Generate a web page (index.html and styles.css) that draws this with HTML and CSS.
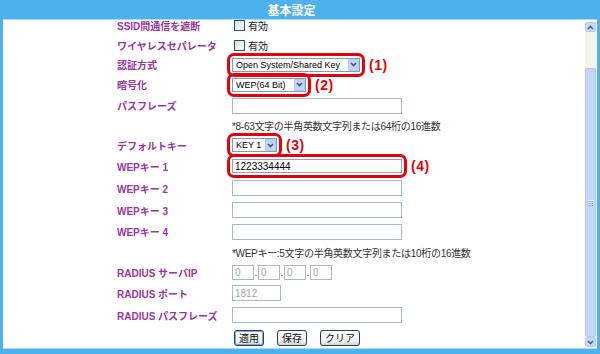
FILE: index.html
```html
<!DOCTYPE html>
<html lang="ja">
<head>
  <meta charset="UTF-8" />
  <meta name="viewport" content="width=device-width, initial-scale=1" />
  <title>基本設定</title>
  <link rel="stylesheet" href="styles.css">
</head>
<body>
  <div class="window">
    <div class="titlebar">基本設定</div>

    <div class="panel">
      <div class="viewport">
        <form class="settings">
          <span class="lbl">SSID間通信を遮断</span>
          <div class="val"><label class="check"><input type="checkbox">有効</label></div>

          <span class="lbl">ワイヤレスセパレータ</span>
          <div class="val"><label class="check"><input type="checkbox">有効</label></div>

          <span class="lbl">認証方式</span>
          <div class="val">
            <span class="mark">
              <span class="select sel-auth">
                <select><option>Open System/Shared Key</option></select>
                <span class="arrow"><svg width="7" height="5" viewBox="0 0 7 5"><path d="M1 1 L3.5 3.5 L6 1" fill="none" stroke="#3f5686" stroke-width="1.6"/></svg></span>
              </span>
            </span>
            <span class="num">(1)</span>
          </div>

          <span class="lbl">暗号化</span>
          <div class="val">
            <span class="mark">
              <span class="select sel-enc">
                <select><option>WEP(64 Bit)</option></select>
                <span class="arrow"><svg width="7" height="5" viewBox="0 0 7 5"><path d="M1 1 L3.5 3.5 L6 1" fill="none" stroke="#3f5686" stroke-width="1.6"/></svg></span>
              </span>
            </span>
            <span class="num">(2)</span>
          </div>

          <span class="lbl">パスフレーズ</span>
          <div class="val"><input class="text" type="text"></div>

          <span></span>
          <div class="val note">*8-63文字の半角英数文字列または64桁の16進数</div>

          <span class="lbl">デフォルトキー</span>
          <div class="val">
            <span class="mark">
              <span class="select sel-key">
                <select><option>KEY 1</option></select>
                <span class="arrow"><svg width="7" height="5" viewBox="0 0 7 5"><path d="M1 1 L3.5 3.5 L6 1" fill="none" stroke="#3f5686" stroke-width="1.6"/></svg></span>
              </span>
            </span>
            <span class="num">(3)</span>
          </div>

          <span class="lbl">WEPキー 1</span>
          <div class="val">
            <span class="mark"><input class="text" type="text" value="1223334444"></span>
            <span class="num">(4)</span>
          </div>

          <span class="lbl">WEPキー 2</span>
          <div class="val"><input class="text" type="text"></div>

          <span class="lbl">WEPキー 3</span>
          <div class="val"><input class="text" type="text"></div>

          <span class="lbl">WEPキー 4</span>
          <div class="val"><input class="text" type="text"></div>

          <span></span>
          <div class="val note">*WEPキー:5文字の半角英数文字列または10桁の16進数</div>

          <span class="lbl">RADIUS サーバIP</span>
          <div class="val ip">
            <input class="text small" type="text" value="0" disabled><span class="dot">.</span>
            <input class="text small" type="text" value="0" disabled><span class="dot">.</span>
            <input class="text small" type="text" value="0" disabled><span class="dot">.</span>
            <input class="text small" type="text" value="0" disabled>
          </div>

          <span class="lbl">RADIUS ポート</span>
          <div class="val"><input class="text port" type="text" value="1812" disabled></div>

          <span class="lbl">RADIUS パスフレーズ</span>
          <div class="val"><input class="text" type="text"></div>

          <span></span>
          <div class="val buttons">
            <button type="button" class="btn default">適用</button>
            <button type="button" class="btn">保存</button>
            <button type="button" class="btn">クリア</button>
          </div>
        </form>
      </div>

      <div class="scrollbar">
        <div class="sb-btn"><svg width="7" height="5" viewBox="0 0 7 5"><path d="M1 4 L3.5 1.5 L6 4" fill="none" stroke="#4d6185" stroke-width="1.6"/></svg></div>
        <div class="sb-track">
          <div class="sb-thumb"><span class="grip"></span></div>
        </div>
        <div class="sb-btn"><svg width="7" height="5" viewBox="0 0 7 5"><path d="M1 1 L3.5 3.5 L6 1" fill="none" stroke="#4d6185" stroke-width="1.6"/></svg></div>
      </div>
    </div>
  </div>
</body>
</html>
```

FILE: styles.css
```css
body {
  margin: 0;
  background: #4cb2ee;
  font-family: "Liberation Sans", "Noto Sans CJK JP", sans-serif;
  color: #222;
}
.window {
  width: 600px;
  height: 354px;
  display: flex;
  flex-direction: column;
}
.titlebar {
  height: 19px;
  line-height: 22px;
  padding-right: 17px;
  text-align: center;
  color: #fff;
  font-size: 12px;
  font-weight: bold;
}
.panel {
  flex: none;
  height: 328px;
  margin: 0 3px;
  border-top: 1px solid #a9dcf9;
  border-bottom: 1px solid #a9dcf9;
  background: #fff;
  display: flex;
}
.viewport {
  flex: 1;
  overflow: hidden;
}
.settings {
  margin-top: -5px;
  padding-left: 114px;
  display: grid;
  grid-template-columns: 115px 1fr;
  grid-template-rows: 20px 20px 19px 21px 21px 19px 20px 22px 22px 22px 21px 20px 20px 22px 22px 23px;
  align-items: center;
}
.lbl {
  color: #9a35a0;
  font-size: 10px;
  font-weight: bold;
  white-space: nowrap;
}
.val {
  display: flex;
  align-items: center;
  font-size: 10px;
  white-space: nowrap;
}
.note {
  color: #333;
  letter-spacing: -0.3px;
}
.check {
  display: flex;
  align-items: center;
  color: #222;
}
.check input {
  appearance: none;
  width: 11px;
  height: 11px;
  margin: 0 3px 0 2px;
  border: 1px solid #1c5180;
  background: linear-gradient(135deg, #dcdcd6, #fff);
}

.mark {
  display: inline-flex;
  padding: 2px;
  margin: -5px 0 -5px -5px;
  border: 3px solid #e8000b;
  border-radius: 7px;
}
.num {
  margin-left: 4px;
  color: #e8000b;
  font-size: 14px;
  font-weight: bold;
  letter-spacing: 0.5px;
}

.select {
  position: relative;
  display: inline-block;
  height: 14px;
}
.select select {
  appearance: none;
  width: 100%;
  height: 100%;
  margin: 0;
  padding: 0 0 0 3px;
  border: 1px solid #7f9db9;
  background: #fff;
  color: #000;
  font-family: "Liberation Sans", sans-serif;
  font-size: 9px;
}
.sel-auth { width: 128px; }
.sel-enc { width: 74px; }
.sel-key { width: 45px; }
.arrow {
  position: absolute;
  top: 1px;
  right: 1px;
  width: 11px;
  height: 12px;
  box-sizing: border-box;
  border: 1px solid #b4c8f4;
  border-radius: 1px;
  background: #c3d4fb;
  display: flex;
  align-items: center;
  justify-content: center;
}

.text {
  width: 170px;
  height: 16px;
  box-sizing: border-box;
  margin: 0;
  padding: 0 2px;
  border: 1px solid #a5b9d1;
  background: #fff;
  color: #000;
  font-family: "Liberation Sans", sans-serif;
  font-size: 10px;
}
.mark .text {
  height: 14px;
  border-color: #8fa4bf;
}
.text:disabled {
  color: #a8a8a8;
  background: #fff;
}
.small {
  width: 22px;
  height: 15px;
}
.port {
  width: 49px;
}
.dot {
  width: 4px;
  align-self: flex-end;
  margin-bottom: 2px;
  text-align: center;
  color: #333;
  line-height: 10px;
}

.buttons {
  padding-left: 2px;
  gap: 13px;
}
.btn {
  height: 16px;
  padding: 0 4px;
  border: 1px solid #1d3f72;
  border-radius: 3px;
  background: linear-gradient(#fff, #f2f1ec 70%, #d9d4c8);
  color: #111;
  font-family: "Noto Sans CJK JP", sans-serif;
  font-size: 10px;
  line-height: 12px;
}
.btn.default {
  box-shadow: inset 0 0 0 1px #7ea7e4;
}

.scrollbar {
  flex: none;
  width: 11px;
  margin: 2px 1px 1px 0;
  display: flex;
  flex-direction: column;
}
.sb-btn {
  height: 10px;
  box-sizing: border-box;
  border: 1px solid #b7c9f2;
  border-radius: 2px;
  background: #c6d6fb;
  display: flex;
  align-items: center;
  justify-content: center;
}
.sb-track {
  flex: 1;
  padding-top: 36px;
  background: #f4f3ec;
  display: flex;
  flex-direction: column;
}
.sb-thumb {
  flex: 1;
  box-sizing: border-box;
  border: 1px solid #b3c6f2;
  border-radius: 2px;
  background: #c4d5fb;
  display: flex;
  align-items: center;
  justify-content: center;
}
.grip {
  width: 5px;
  height: 6px;
  background: repeating-linear-gradient(#eef3fe 0 1px, #8eadf0 1px 2px);
}
```
